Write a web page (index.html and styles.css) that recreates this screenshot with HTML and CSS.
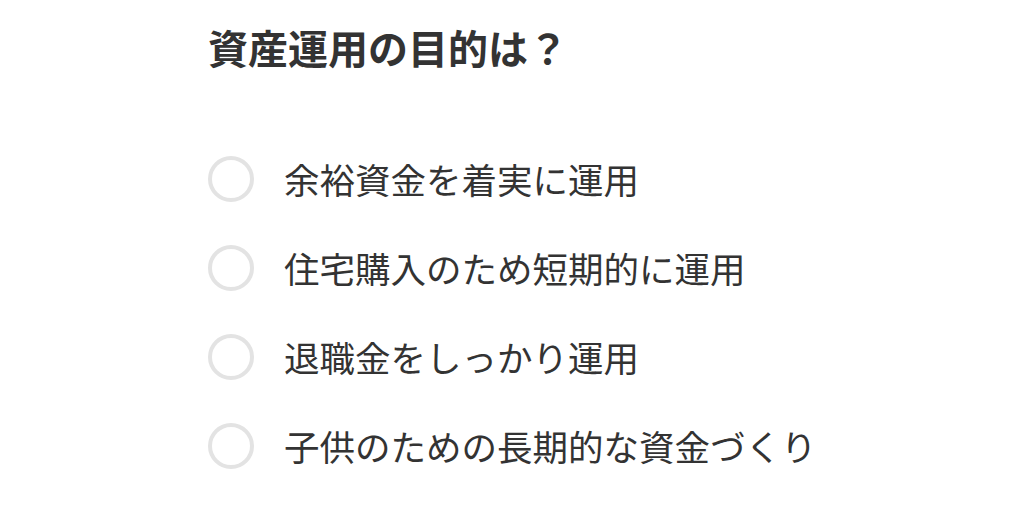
FILE: index.html
```html
<!DOCTYPE html>
<html lang="ja">
<head>
<meta charset="utf-8">
<link rel="stylesheet" href="styles.css">
</head>
<body>
<div class="page">
  <h1 class="title">資産運用の目的は？</h1>
  <ul class="options">
    <li class="option"><span class="radio"></span><span class="label">余裕資金を着実に運用</span></li>
    <li class="option"><span class="radio"></span><span class="label">住宅購入のため短期的に運用</span></li>
    <li class="option"><span class="radio"></span><span class="label">退職金をしっかり運用</span></li>
    <li class="option"><span class="radio"></span><span class="label">子供のための長期的な資金づくり</span></li>
  </ul>
</div>
</body>
</html>
```
FILE: styles.css
```css
html, body {
  margin: 0;
  padding: 0;
  background: #ffffff;
}
body {
  font-family: "Noto Sans CJK JP", "Noto Sans", sans-serif;
  color: #333333;
}
.page {
  padding: 19px 0 0 208px;
}
.title {
  margin: 0;
  font-size: 40px;
  font-weight: 700;
  line-height: 56px;
  color: #333333;
}
.options {
  list-style: none;
  margin: 0;
  padding: 0;
  margin-top: 81px;
  display: flex;
  flex-direction: column;
  gap: 43px;
}
.option {
  display: flex;
  align-items: center;
  gap: 30px;
  height: 46px;
}
.radio {
  box-sizing: border-box;
  width: 46px;
  height: 46px;
  border: 4px solid #e3e3e3;
  border-radius: 50%;
  flex: none;
}
.label {
  font-size: 35.5px;
  line-height: 46px;
  color: #333333;
}
```
